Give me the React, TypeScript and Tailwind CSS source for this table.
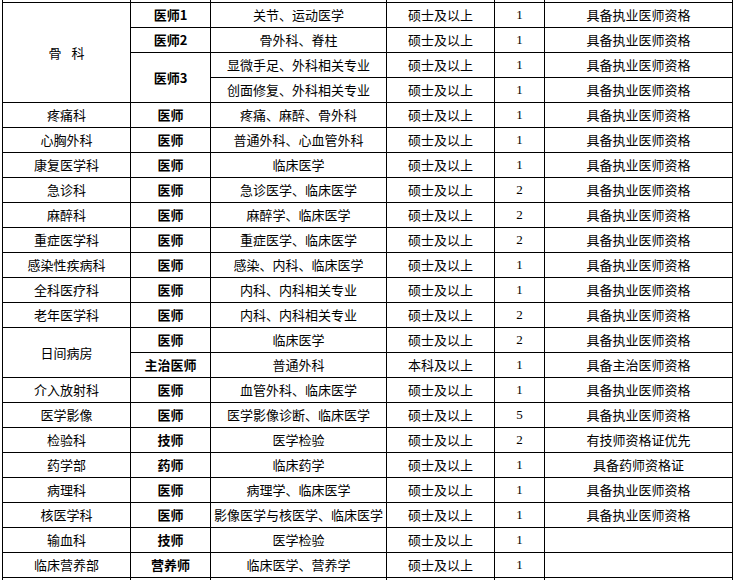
type Row = {
  dept?: string;
  deptSpan?: number;
  title?: string;
  titleSpan?: number;
  major: string;
  edu: string;
  num: string;
  req: string;
};

const rows: Row[] = [
  { dept: '骨科', deptSpan: 4, title: '医师1', major: '关节、运动医学', edu: '硕士及以上', num: '1', req: '具备执业医师资格' },
  { title: '医师2', major: '骨外科、脊柱', edu: '硕士及以上', num: '1', req: '具备执业医师资格' },
  { title: '医师3', titleSpan: 2, major: '显微手足、外科相关专业', edu: '硕士及以上', num: '1', req: '具备执业医师资格' },
  { major: '创面修复、外科相关专业', edu: '硕士及以上', num: '1', req: '具备执业医师资格' },
  { dept: '疼痛科', title: '医师', major: '疼痛、麻醉、骨外科', edu: '硕士及以上', num: '1', req: '具备执业医师资格' },
  { dept: '心胸外科', title: '医师', major: '普通外科、心血管外科', edu: '硕士及以上', num: '1', req: '具备执业医师资格' },
  { dept: '康复医学科', title: '医师', major: '临床医学', edu: '硕士及以上', num: '1', req: '具备执业医师资格' },
  { dept: '急诊科', title: '医师', major: '急诊医学、临床医学', edu: '硕士及以上', num: '2', req: '具备执业医师资格' },
  { dept: '麻醉科', title: '医师', major: '麻醉学、临床医学', edu: '硕士及以上', num: '2', req: '具备执业医师资格' },
  { dept: '重症医学科', title: '医师', major: '重症医学、临床医学', edu: '硕士及以上', num: '2', req: '具备执业医师资格' },
  { dept: '感染性疾病科', title: '医师', major: '感染、内科、临床医学', edu: '硕士及以上', num: '1', req: '具备执业医师资格' },
  { dept: '全科医疗科', title: '医师', major: '内科、内科相关专业', edu: '硕士及以上', num: '1', req: '具备执业医师资格' },
  { dept: '老年医学科', title: '医师', major: '内科、内科相关专业', edu: '硕士及以上', num: '2', req: '具备执业医师资格' },
  { dept: '日间病房', deptSpan: 2, title: '医师', major: '临床医学', edu: '硕士及以上', num: '2', req: '具备执业医师资格' },
  { title: '主治医师', major: '普通外科', edu: '本科及以上', num: '1', req: '具备主治医师资格' },
  { dept: '介入放射科', title: '医师', major: '血管外科、临床医学', edu: '硕士及以上', num: '1', req: '具备执业医师资格' },
  { dept: '医学影像', title: '医师', major: '医学影像诊断、临床医学', edu: '硕士及以上', num: '5', req: '具备执业医师资格' },
  { dept: '检验科', title: '技师', major: '医学检验', edu: '硕士及以上', num: '2', req: '有技师资格证优先' },
  { dept: '药学部', title: '药师', major: '临床药学', edu: '硕士及以上', num: '1', req: '具备药师资格证' },
  { dept: '病理科', title: '医师', major: '病理学、临床医学', edu: '硕士及以上', num: '1', req: '具备执业医师资格' },
  { dept: '核医学科', title: '医师', major: '影像医学与核医学、临床医学', edu: '硕士及以上', num: '1', req: '具备执业医师资格' },
  { dept: '输血科', title: '技师', major: '医学检验', edu: '硕士及以上', num: '1', req: '' },
  { dept: '临床营养部', title: '营养师', major: '临床医学、营养学', edu: '硕士及以上', num: '1', req: '' },
];

const cell = 'border border-black p-0 text-center align-middle whitespace-nowrap overflow-hidden';

export default function App() {
  return (
    <div className="w-[734px] h-[580px] overflow-hidden bg-white text-black">
      <table
        className="ml-[2px] mt-[-23px] w-[730px] table-fixed border-collapse text-[13px] leading-[18px]"
        style={{ fontFamily: '"Noto Sans CJK SC", "Noto Sans", sans-serif' }}
      >
        <colgroup>
          <col className="w-[128px]" />
          <col className="w-[80px]" />
          <col className="w-[176px]" />
          <col className="w-[108px]" />
          <col className="w-[50px]" />
          <col className="w-[188px]" />
        </colgroup>
        <tbody>
          {/* row cut off above the screenshot */}
          <tr className="h-[25px]">
            <td className={cell}></td>
            <td className={cell}></td>
            <td className={cell}></td>
            <td className={cell}></td>
            <td className={cell}></td>
            <td className={cell}></td>
          </tr>
          {rows.map((r, i) => (
            <tr key={i} className="h-[25px]">
              {r.dept && (
                <td className={cell} rowSpan={r.deptSpan}>
                  {r.dept === '骨科' ? (
                    <>
                      <span>骨</span>
                      <span className="ml-[10px]">科</span>
                    </>
                  ) : (
                    r.dept
                  )}
                </td>
              )}
              {r.title && (
                <td className={`${cell} font-bold`} rowSpan={r.titleSpan}>
                  {r.title}
                </td>
              )}
              <td className={cell}>{r.major}</td>
              <td className={cell}>{r.edu}</td>
              <td className={cell} style={{ fontFamily: '"Liberation Serif", serif' }}>
                {r.num}
              </td>
              <td className={cell}>{r.req}</td>
            </tr>
          ))}
          <tr className="h-[25px]">
            <td className={cell}></td>
            <td className={cell}></td>
            <td className={cell}></td>
            <td className={cell}></td>
            <td className={cell}></td>
            <td className={cell}></td>
          </tr>
        </tbody>
      </table>
    </div>
  );
}
